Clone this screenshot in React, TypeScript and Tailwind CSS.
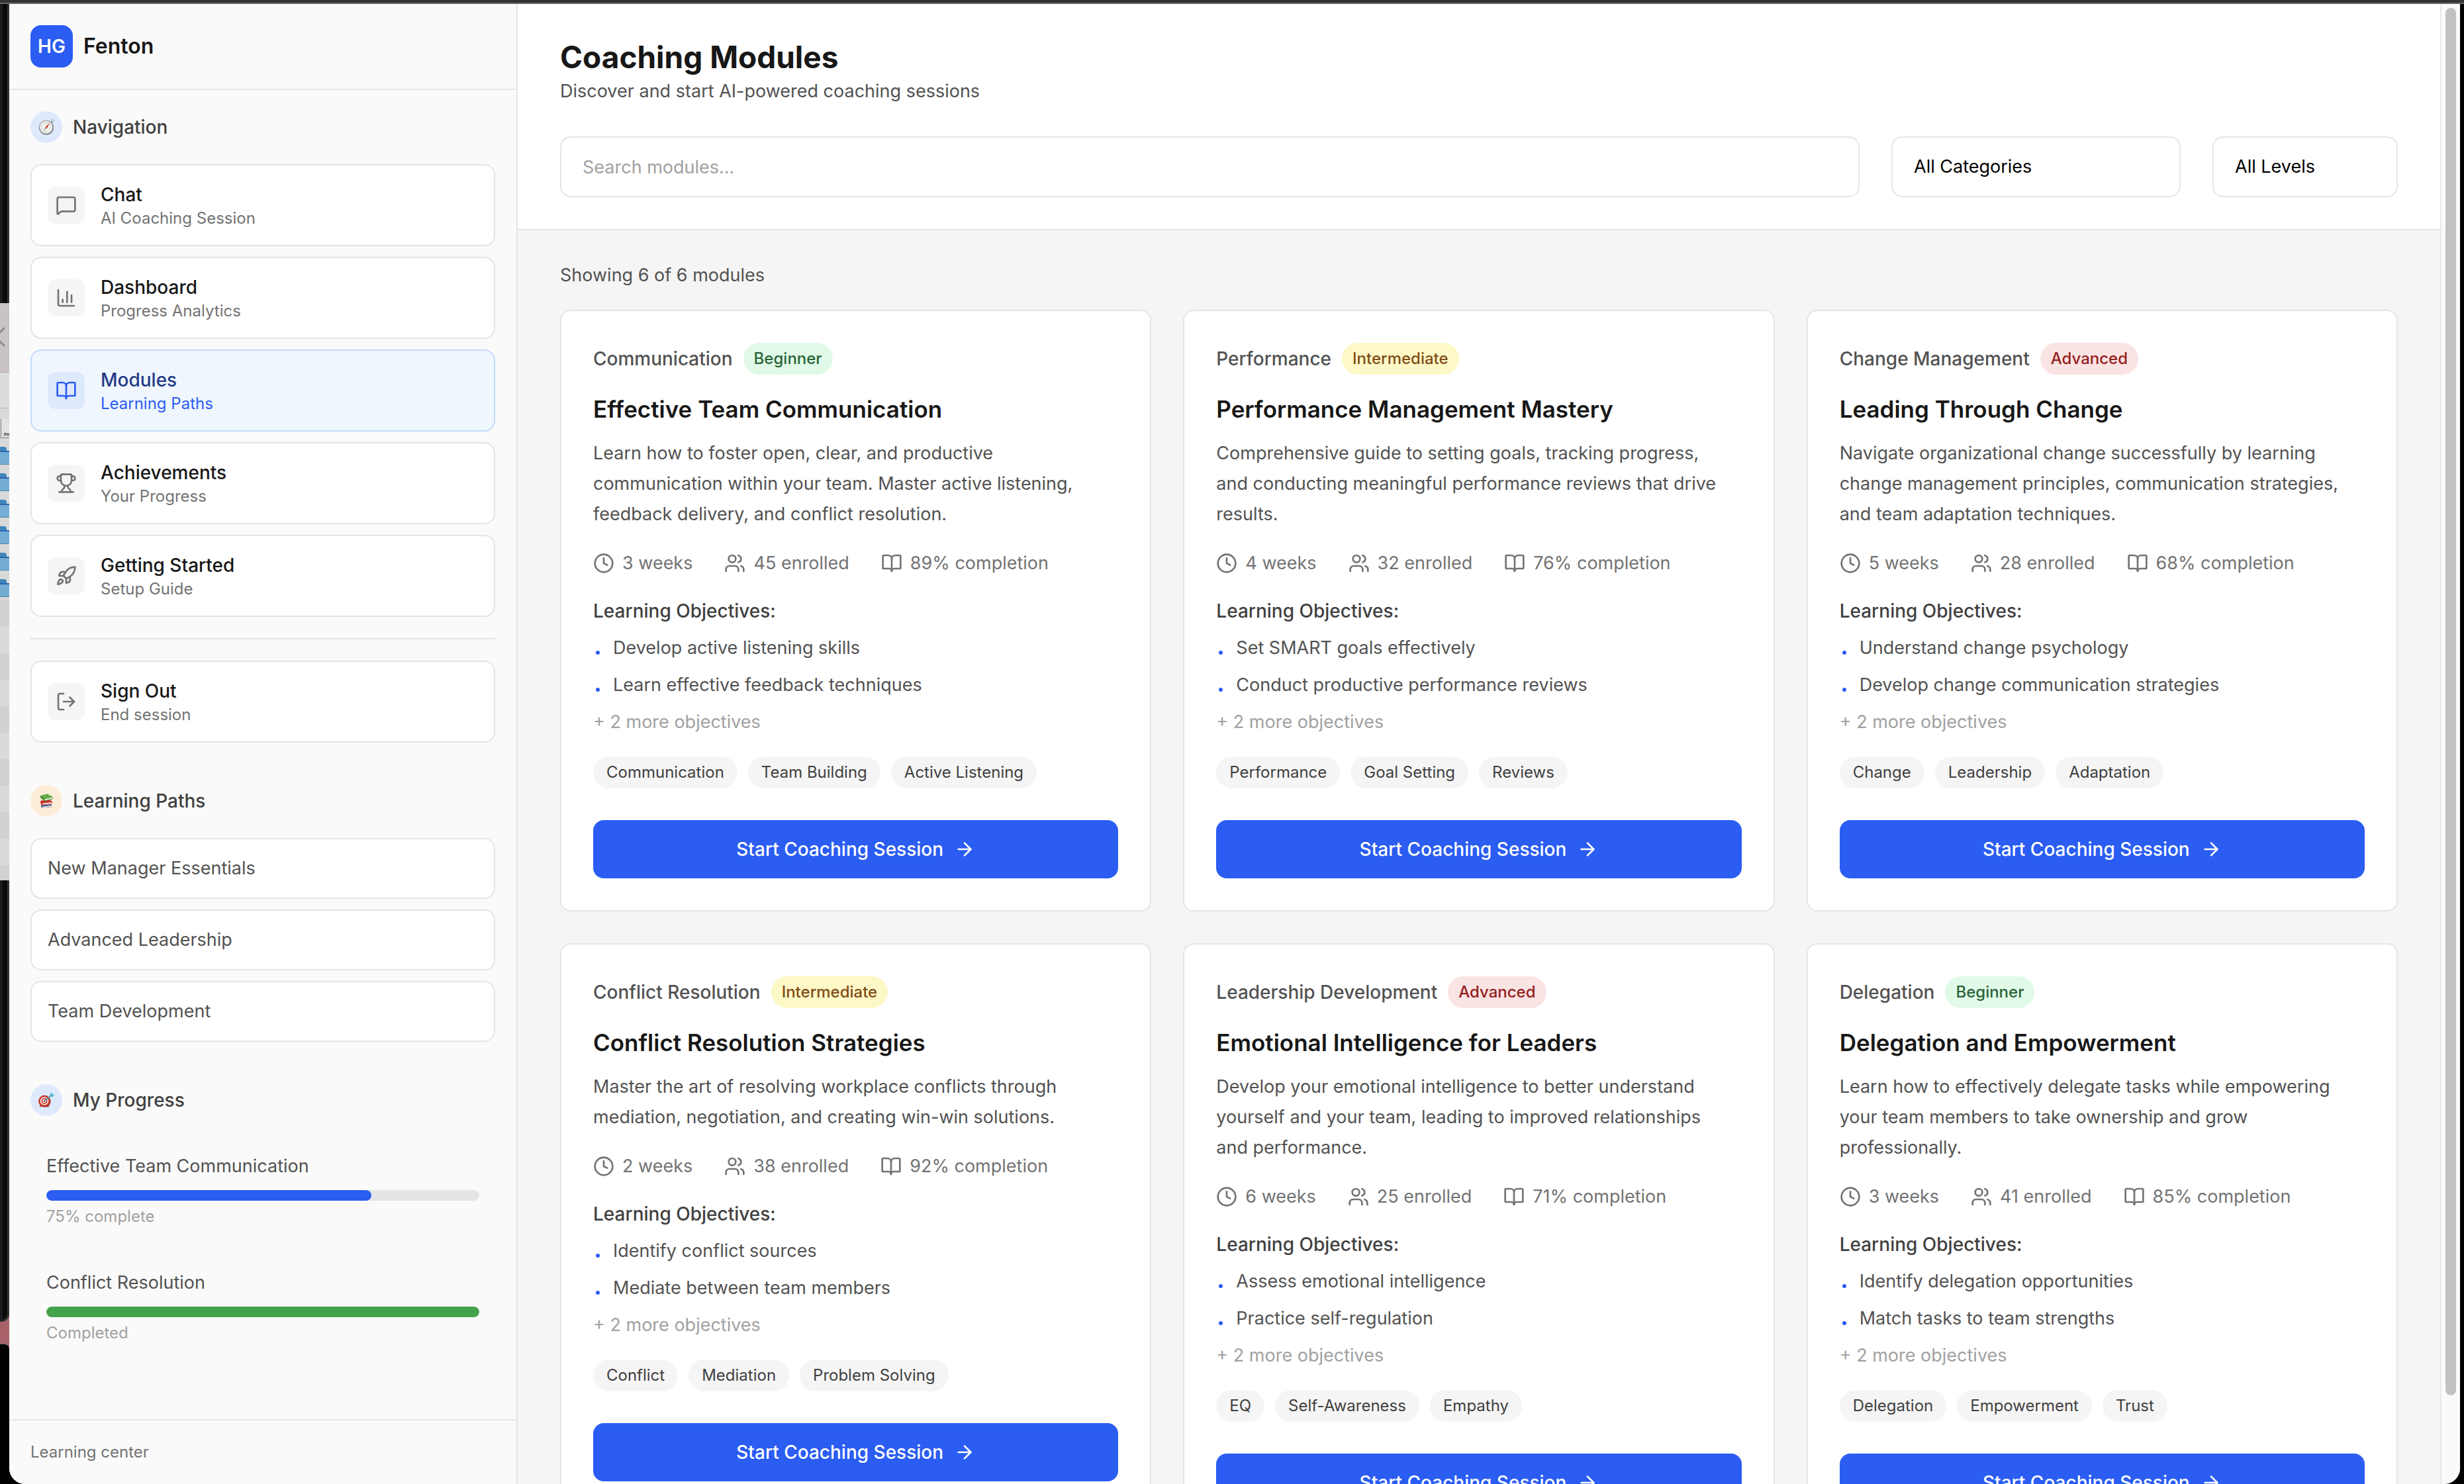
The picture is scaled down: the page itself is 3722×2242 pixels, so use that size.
import { useState } from "react";
import type { ReactNode } from "react";
import {
  ArrowRight,
  BookOpen,
  Clock,
  LogOut,
  MessageSquare,
  Rocket,
  Trophy,
  Users,
} from "lucide-react";

type Level = "Beginner" | "Intermediate" | "Advanced";

interface CoachingModule {
  category: string;
  level: Level;
  title: string;
  description: string;
  weeks: number;
  enrolled: number;
  completion: number;
  objectives: string[];
  more: number;
  tags: string[];
}

const modules: CoachingModule[] = [
  {
    category: "Communication",
    level: "Beginner",
    title: "Effective Team Communication",
    description:
      "Learn how to foster open, clear, and productive communication within your team. Master active listening, feedback delivery, and conflict resolution.",
    weeks: 3,
    enrolled: 45,
    completion: 89,
    objectives: ["Develop active listening skills", "Learn effective feedback techniques"],
    more: 2,
    tags: ["Communication", "Team Building", "Active Listening"],
  },
  {
    category: "Performance",
    level: "Intermediate",
    title: "Performance Management Mastery",
    description:
      "Comprehensive guide to setting goals, tracking progress, and conducting meaningful performance reviews that drive results.",
    weeks: 4,
    enrolled: 32,
    completion: 76,
    objectives: ["Set SMART goals effectively", "Conduct productive performance reviews"],
    more: 2,
    tags: ["Performance", "Goal Setting", "Reviews"],
  },
  {
    category: "Change Management",
    level: "Advanced",
    title: "Leading Through Change",
    description:
      "Navigate organizational change successfully by learning change management principles, communication strategies, and team adaptation techniques.",
    weeks: 5,
    enrolled: 28,
    completion: 68,
    objectives: ["Understand change psychology", "Develop change communication strategies"],
    more: 2,
    tags: ["Change", "Leadership", "Adaptation"],
  },
  {
    category: "Conflict Resolution",
    level: "Intermediate",
    title: "Conflict Resolution Strategies",
    description:
      "Master the art of resolving workplace conflicts through mediation, negotiation, and creating win-win solutions.",
    weeks: 2,
    enrolled: 38,
    completion: 92,
    objectives: ["Identify conflict sources", "Mediate between team members"],
    more: 2,
    tags: ["Conflict", "Mediation", "Problem Solving"],
  },
  {
    category: "Leadership Development",
    level: "Advanced",
    title: "Emotional Intelligence for Leaders",
    description:
      "Develop your emotional intelligence to better understand yourself and your team, leading to improved relationships and performance.",
    weeks: 6,
    enrolled: 25,
    completion: 71,
    objectives: ["Assess emotional intelligence", "Practice self-regulation"],
    more: 2,
    tags: ["EQ", "Self-Awareness", "Empathy"],
  },
  {
    category: "Delegation",
    level: "Beginner",
    title: "Delegation and Empowerment",
    description:
      "Learn how to effectively delegate tasks while empowering your team members to take ownership and grow professionally.",
    weeks: 3,
    enrolled: 41,
    completion: 85,
    objectives: ["Identify delegation opportunities", "Match tasks to team strengths"],
    more: 2,
    tags: ["Delegation", "Empowerment", "Trust"],
  },
];

const levelStyles: Record<Level, string> = {
  Beginner: "bg-[#e1fae8] text-[#2a6438]",
  Intermediate: "bg-[#fdf8c7] text-[#814d18]",
  Advanced: "bg-[#fae3e3] text-[#922120]",
};

function ChartIcon({ className }: { className?: string }) {
  return (
    <svg viewBox="0 0 24 24" fill="none" stroke="currentColor" strokeWidth="2" strokeLinecap="round" strokeLinejoin="round" className={className} aria-hidden="true">
      <path d="M3 3v16a2 2 0 0 0 2 2h16" />
      <path d="M18 17V9" />
      <path d="M13 17V5" />
      <path d="M8 17v-3" />
    </svg>
  );
}

function CompassEmoji() {
  return (
    <svg viewBox="0 0 24 24" className="size-6" aria-hidden="true">
      <defs>
        <linearGradient id="rim" x1="0" y1="0" x2="1" y2="1">
          <stop offset="0" stopColor="#b9bcbe" />
          <stop offset="1" stopColor="#5f6264" />
        </linearGradient>
      </defs>
      <circle cx="21.4" cy="2.4" r="1.7" fill="none" stroke="#9a9da0" strokeWidth="1" />
      <path d="M17.8 4.6l1.8 2 1.4-1.8-1.6-1.6z" fill="#8a8d90" />
      <circle cx="11.8" cy="12.6" r="11.2" fill="url(#rim)" />
      <circle cx="11.8" cy="12.4" r="9.6" fill="#eeeeeb" />
      <circle cx="11.8" cy="12.4" r="7.2" fill="none" stroke="#d2d2cf" strokeWidth="1" />
      <path d="M6.6 19.4l4.2-7.4 1.8 1.4z" fill="#a3a5a6" />
      <path d="M17.2 5.6l-6.6 6.4 2.2 2z" fill="#d92f26" />
    </svg>
  );
}

function BooksEmoji() {
  return (
    <svg viewBox="0 0 24 24" className="size-6" aria-hidden="true">
      <path d="M4 18.4l15-1.2 1.2 1.4-1 2.6-13 1.4-2-1.6z" fill="#34487e" />
      <path d="M6 20.4l13-1.4.6.8-.6 1.2-12.4 1.2z" fill="#e9ebf0" />
      <path d="M3.4 11.6l14.6-1 3.2 3.2-.6 2.8-15.4 2-2-2.6z" fill="#c5302a" />
      <path d="M6 15.8l14-1.8.4.8-.4 1.2-14 1.6z" fill="#f3e4e0" />
      <path d="M2.6 4.2L13.4 1.4l8 4.6.4 1.4-.6 2L9.4 12.2 3.2 7.6z" fill="#4c8f3b" />
      <path d="M9.6 9.2l11.6-2.6.2 1.6-11.4 3z" fill="#eef3e8" />
      <path d="M2.6 4.2L13.4 1.4l8 4.6-11.8 2.8z" fill="#62ad4c" />
    </svg>
  );
}

function TargetEmoji() {
  return (
    <svg viewBox="0 0 24 24" className="size-6" aria-hidden="true">
      <path d="M4 20l-1.6 2.4M13.4 20l1.8 2.4" stroke="#7a3b34" strokeWidth="1.6" />
      <ellipse cx="9.4" cy="13.8" rx="9.2" ry="9" fill="#a3271f" />
      <circle cx="9" cy="13.4" r="8.4" fill="#cf3a30" />
      <circle cx="9" cy="13.4" r="6.2" fill="#f4efee" />
      <circle cx="9" cy="13.4" r="4.6" fill="#cf3a30" />
      <circle cx="9" cy="13.4" r="2.8" fill="#f4efee" />
      <circle cx="9" cy="13.4" r="1.5" fill="#cf3a30" />
      <path d="M9 13.4L19 5.4" stroke="#3d97a3" strokeWidth="1.6" strokeLinecap="round" />
      <path d="M17 6.8l.6-4.4L21 .8l.4 2.6 2.4 1-2.6 3z" fill="#58b6c4" />
    </svg>
  );
}

function SectionTitle({ tone, emoji, children }: { tone: string; emoji: ReactNode; children: ReactNode }) {
  return (
    <div className="mb-8 flex items-center gap-4">
      <span className={`flex size-12 shrink-0 items-center justify-center rounded-full ${tone}`}>{emoji}</span>
      <h2 className="text-[28px] leading-10 font-medium text-[#404040]">{children}</h2>
    </div>
  );
}

function NavItem({ icon, title, subtitle, active = false }: { icon: ReactNode; title: string; subtitle: string; active?: boolean }) {
  return (
    <button
      type="button"
      aria-current={active ? "page" : undefined}
      className={`flex w-full items-center gap-6 rounded-2xl border-2 p-6 text-left ${
        active ? "border-[#c1dafd] bg-[#eff6fe]" : "border-[#e5e5e5] bg-white"
      }`}
    >
      <span
        className={`flex size-14 shrink-0 items-center justify-center rounded-xl ${
          active ? "bg-[#dee9fc] text-[#2b5df2]" : "bg-[#f5f5f5] text-[#737373]"
        }`}
      >
        {icon}
      </span>
      <span className="flex flex-col">
        <span className={`text-[28px] leading-10 font-medium ${active ? "text-[#243a86]" : "text-[#171717]"}`}>{title}</span>
        <span className={`text-[24px] leading-8 ${active ? "text-[#2b5df2]" : "text-[#737373]"}`}>{subtitle}</span>
      </span>
    </button>
  );
}

function ProgressItem({ title, note, value, bar }: { title: string; note: string; value: number; bar: string }) {
  return (
    <div className="p-6">
      <p className="text-[27px] leading-10 text-[#525252]">{title}</p>
      <div
        role="progressbar"
        aria-label={title}
        aria-valuenow={value}
        aria-valuemin={0}
        aria-valuemax={100}
        className="mt-4 h-4 overflow-hidden rounded-full bg-[#e5e5e5]"
      >
        <div className={`h-full rounded-full ${bar}`} style={{ width: `${value}%` }} />
      </div>
      <p className="mt-2 text-[24px] leading-8 text-[#a1a1a1]">{note}</p>
    </div>
  );
}

function Sidebar() {
  return (
    <aside className="flex w-3xl shrink-0 flex-col border-r-2 border-[#e5e5e5] bg-[#fafafa]">
      <div className="flex items-center gap-4 border-b-2 border-[#e5e5e5] p-8">
        <span className="flex size-16 items-center justify-center rounded-2xl bg-[#2b5df2] text-[28px] font-semibold text-white">HG</span>
        <span className="text-[32px] leading-12 font-semibold text-[#171717]">Fenton</span>
      </div>
      <div className="flex min-h-0 flex-1 flex-col gap-16 overflow-hidden p-8">
        <nav aria-label="Main">
          <SectionTitle tone="bg-[#dee9fc]" emoji={<CompassEmoji />}>Navigation</SectionTitle>
          <div className="flex flex-col gap-4">
            <NavItem icon={<MessageSquare className="size-8" />} title="Chat" subtitle="AI Coaching Session" />
            <NavItem icon={<ChartIcon className="size-8" />} title="Dashboard" subtitle="Progress Analytics" />
            <NavItem icon={<BookOpen className="size-8" />} title="Modules" subtitle="Learning Paths" active />
            <NavItem icon={<Trophy className="size-8" />} title="Achievements" subtitle="Your Progress" />
            <NavItem icon={<Rocket className="size-8" />} title="Getting Started" subtitle="Setup Guide" />
          </div>
          <hr className="my-8 border-t-2 border-[#e5e5e5]" />
          <NavItem icon={<LogOut className="size-8" />} title="Sign Out" subtitle="End session" />
        </nav>
        <section>
          <SectionTitle tone="bg-[#fdedd8]" emoji={<BooksEmoji />}>Learning Paths</SectionTitle>
          <div className="flex flex-col gap-4">
            {["New Manager Essentials", "Advanced Leadership", "Team Development"].map((path) => (
              <button
                key={path}
                type="button"
                className="rounded-2xl border-2 border-[#e5e5e5] bg-white p-6 text-left text-[27px] leading-10 text-[#525252]"
              >
                {path}
              </button>
            ))}
          </div>
        </section>
        <section>
          <SectionTitle tone="bg-[#dee9fc]" emoji={<TargetEmoji />}>My Progress</SectionTitle>
          <div className="flex flex-col gap-4">
            <ProgressItem title="Effective Team Communication" note="75% complete" value={75} bar="bg-[#2b5df2]" />
            <ProgressItem title="Conflict Resolution" note="Completed" value={100} bar="bg-[#42a34c]" />
          </div>
        </section>
      </div>
      <footer className="border-t-2 border-[#e5e5e5] p-8 text-[24px] leading-8 text-[#737373]">Learning center</footer>
    </aside>
  );
}

function Stat({ icon, children }: { icon: ReactNode; children: ReactNode }) {
  return (
    <span className="flex items-center gap-3">
      {icon}
      <span>{children}</span>
    </span>
  );
}

function ModuleCard({ module }: { module: CoachingModule }) {
  return (
    <article className="flex flex-col rounded-2xl border-2 border-[#e5e5e5] bg-white p-12">
      <div className="flex items-center gap-4">
        <span className="text-[28px] leading-10 font-medium text-[#525252]">{module.category}</span>
        <span className={`rounded-full px-4 py-2 text-[24px] leading-8 font-medium ${levelStyles[module.level]}`}>{module.level}</span>
      </div>
      <h3 className="mt-6 text-[35px] leading-14 font-semibold text-[#171717]">{module.title}</h3>
      <p className="mt-4 pr-4 text-[27px] leading-[46px] text-[#525252]">{module.description}</p>
      <div className="mt-[31px] flex items-center gap-12 text-[27px] leading-10 text-[#737373]">
        <Stat icon={<Clock className="size-8" />}>{module.weeks} weeks</Stat>
        <Stat icon={<Users className="size-8" />}>{module.enrolled} enrolled</Stat>
        <Stat icon={<BookOpen className="size-8" />}>{module.completion}% completion</Stat>
      </div>
      <h4 className="mt-8 text-[28px] leading-10 font-medium text-[#404040]">Learning Objectives:</h4>
      <ul className="mt-4 flex flex-col gap-4 text-[27px] leading-10 text-[#525252]">
        {module.objectives.map((objective) => (
          <li key={objective} className="flex items-start gap-5 pl-1">
            <span className="mt-6 size-1.5 shrink-0 rounded-full bg-[#2b5df2]" />
            {objective}
          </li>
        ))}
        <li className="text-[#a1a1a1]">+ {module.more} more objectives</li>
      </ul>
      <div className="mt-8 flex gap-4">
        {module.tags.map((tag) => (
          <span key={tag} className="rounded-full bg-[#f5f5f5] px-5 py-2 text-[24px] leading-8 text-[#404040]">
            {tag}
          </span>
        ))}
      </div>
      <button
        type="button"
        className="mt-12 flex items-center justify-center gap-4 rounded-2xl bg-[#2b5df2] px-8 py-6 text-[28px] leading-10 font-medium text-white"
      >
        Start Coaching Session
        <ArrowRight className="size-8" />
      </button>
    </article>
  );
}

function DesktopFolder() {
  return (
    <div className="h-10 shrink-0 bg-[#d8d9d8] pt-2">
      <div className="h-1.5 w-2.5 rounded-tr bg-[#3f86bd]" />
      <div className="h-[21px] border-t-2 border-b border-t-[#2a66ae] border-b-[#4f88ad] bg-[#74add3]" />
    </div>
  );
}

/* Slice of the desktop that stays visible to the left of the window. */
function DesktopEdge() {
  return (
    <div className="flex w-3.5 shrink-0 flex-col overflow-hidden bg-[#a9626a]" aria-hidden="true">
      <div className="h-[452px] shrink-0 border-r-3 border-l-4 border-r-[#333333] border-l-[#1b1c22] bg-[#0b0b0c]" />
      <div className="h-[105px] shrink-0 border-b border-[#aeaaa9] bg-[#c9c4c3] pt-9">
        <svg viewBox="0 0 14 30" className="h-[30px] w-3.5" fill="none" stroke="#8f8b8a" strokeWidth="3" strokeLinecap="round">
          <path d="M6 2L-7 15L6 28" />
        </svg>
      </div>
      <div className="h-[54px] shrink-0 border-b border-[#b4b4b4] bg-[#dcdcdc]" />
      <div className="h-[50px] shrink-0 bg-[#dadada] pt-4 pl-px">
        <div className="h-[29px] overflow-hidden border-b border-l border-[#7d7d7d] bg-[#e2e2e2] pt-5 pl-1 text-[6px] leading-2 font-bold text-[#333333]">
          PH
        </div>
      </div>
      {[0, 1, 2, 3, 4, 5].map((i) => (
        <DesktopFolder key={i} />
      ))}
      {[0, 1, 2, 3, 4].map((i) => (
        <div key={i} className="flex h-20 shrink-0 flex-col">
          <div className="flex-1 bg-[#cfd2d1]" />
          <div className="flex-1 bg-[#dadada]" />
        </div>
      ))}
      <div className="h-[23px] shrink-0 bg-[#cfd2d1]" />
      <div className="h-[667px] shrink-0 rounded-br-xl border-r-3 border-b-3 border-l-4 border-r-[#333333] border-b-[#333333] border-l-[#1b1c22] bg-[#0b0b0c]" />
      <div className="mt-[33px] flex-1 rounded-tr-lg border-t border-[#6b6b6b] bg-black" />
    </div>
  );
}

export default function App() {
  const [query, setQuery] = useState("");
  const [category, setCategory] = useState("All Categories");
  const [level, setLevel] = useState("All Levels");

  const visible = modules.filter(
    (m) =>
      m.title.toLowerCase().includes(query.toLowerCase()) &&
      (category === "All Categories" || m.category === category) &&
      (level === "All Levels" || m.level === level),
  );

  const field = "h-[92px] rounded-2xl border-2 border-[#e5e5e5] bg-white px-8 text-[27px]";

  return (
    <div className="flex h-screen flex-col overflow-hidden bg-black font-['Inter',sans-serif]">
      <div className="h-1.5 shrink-0 border-b-2 border-[#666666] bg-[#333333]" />
      <div className="flex min-h-0 flex-1 pr-1.5">
        <DesktopEdge />
        <div className="flex min-w-0 flex-1 overflow-hidden rounded-b-3xl bg-[#fafafa]">
          <Sidebar />
          <main className="min-w-0 flex-1 overflow-hidden bg-[#f5f5f5]">
            <header className="border-b-2 border-[#e5e5e5] bg-white px-16 py-12">
              <h1 className="text-[46px] leading-16 font-bold text-[#171717]">Coaching Modules</h1>
              <p className="text-[27px] leading-10 text-[#525252]">Discover and start AI-powered coaching sessions</p>
              <div className="mt-12 flex gap-12">
                <input
                  type="text"
                  aria-label="Search modules"
                  placeholder="Search modules..."
                  value={query}
                  onChange={(e) => setQuery(e.target.value)}
                  className={`${field} min-w-0 flex-1 placeholder:text-[#a1a1a1]`}
                />
                <select
                  aria-label="Category"
                  value={category}
                  onChange={(e) => setCategory(e.target.value)}
                  className={`${field} w-[437px] appearance-none text-black`}
                >
                  <option>All Categories</option>
                  {modules.map((m) => (
                    <option key={m.category}>{m.category}</option>
                  ))}
                </select>
                <select
                  aria-label="Level"
                  value={level}
                  onChange={(e) => setLevel(e.target.value)}
                  className={`${field} w-70 appearance-none text-black`}
                >
                  <option>All Levels</option>
                  <option>Beginner</option>
                  <option>Intermediate</option>
                  <option>Advanced</option>
                </select>
              </div>
            </header>
            <div className="px-16 py-12">
              <p className="mb-8 text-[27px] leading-10 text-[#525252]">
                Showing {visible.length} of {modules.length} modules
              </p>
              <div className="grid grid-cols-3 gap-12">
                {visible.map((m) => (
                  <ModuleCard key={m.title} module={m} />
                ))}
              </div>
            </div>
          </main>
          <div className="flex w-7.5 shrink-0 justify-center border-l-2 border-[#e8e8e8] bg-[#fafafa] pt-1.5" aria-hidden="true">
            <div className="h-[94%] w-4 rounded-full bg-[#c1c1c1]" />
          </div>
        </div>
      </div>
    </div>
  );
}
